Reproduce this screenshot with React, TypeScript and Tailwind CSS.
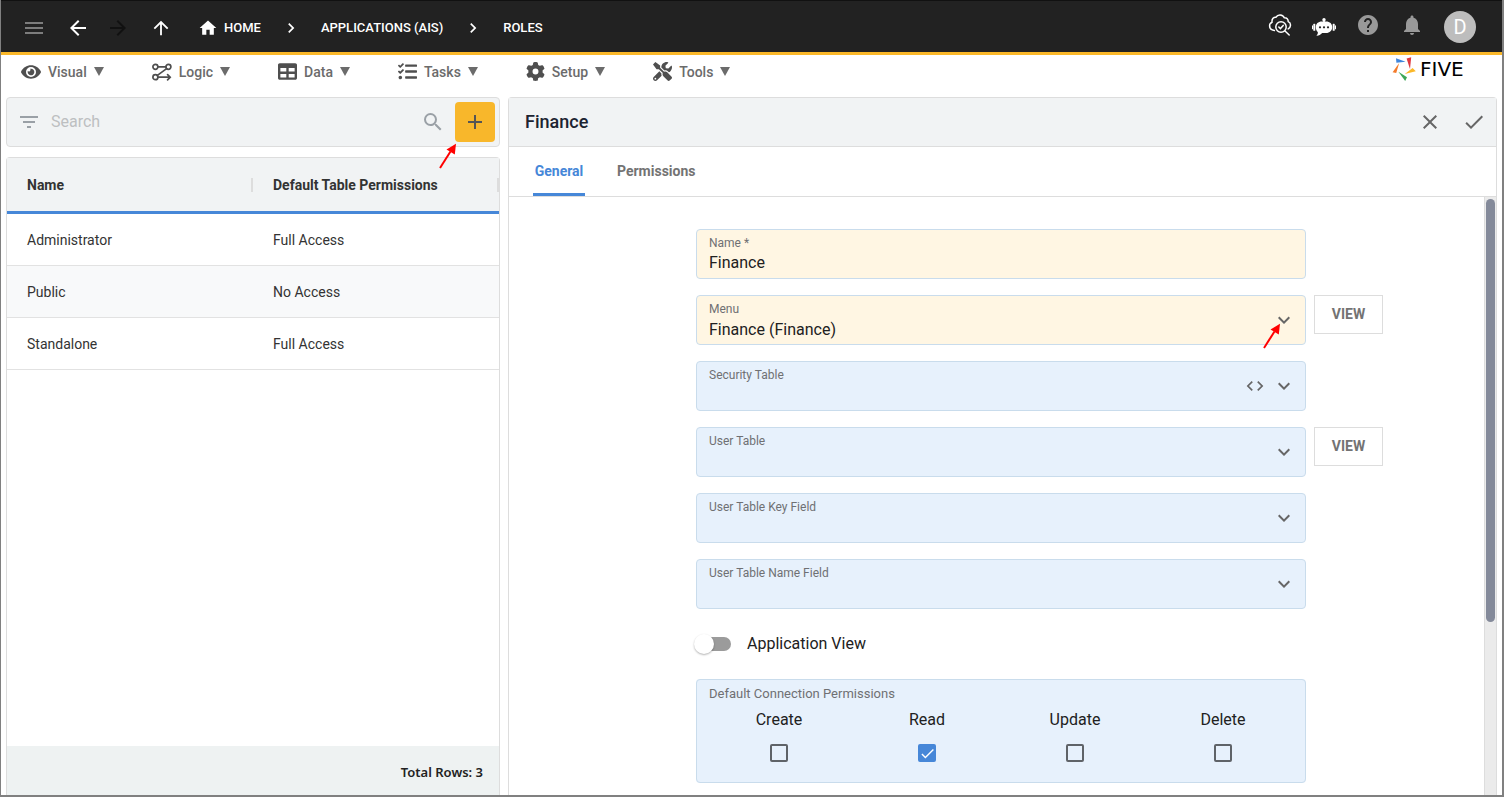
import { useState } from "react";
import type { ReactNode } from "react";
import { FaEye, FaTable, FaTasks, FaTools } from "react-icons/fa";
import { FaGear } from "react-icons/fa6";
import {
  MdAdd,
  MdArrowBack,
  MdArrowForward,
  MdArrowUpward,
  MdCheck,
  MdChevronRight,
  MdClose,
  MdCode,
  MdExpandMore,
  MdFilterList,
  MdHelp,
  MdHome,
  MdMenu,
  MdNotifications,
  MdSearch,
} from "react-icons/md";

function LogicIcon() {
  return (
    <svg viewBox="0 0 20 18" className="h-[18px] w-5" fill="none" stroke="currentColor" strokeWidth="1.7" strokeLinecap="round">
      <circle cx="3.4" cy="3.8" r="2.5" />
      <circle cx="16.4" cy="3.8" r="2.5" />
      <circle cx="3.4" cy="14.2" r="2.5" />
      <path d="M6 3.8h7.8M14.6 5.6 5.4 12.4M6 14.2h11.6M15.6 11.6l2.600 2.600-2.600 2.600" />
    </svg>
  );
}

function CloudCheckIcon() {
  return (
    <svg viewBox="0 0 24 24" className="size-6" fill="none" stroke="currentColor" strokeWidth="1.5" strokeLinecap="round">
      <path d="M6.400 17.600C3.600 17.200 1.600 15.400 1.600 12.800c0-1.800 1-3 2.400-3.600C3.600 6 5.800 3.800 8 4.200 9 2.400 10.600 1.800 12.200 1.900c2 .1 3.500 1.200 4.100 2.800 2.500-.2 4 1.700 3.900 3.900 1.600.7 2.400 2 2.300 3.600-.1 1.700-.9 3-2.300 3.700" />
      <circle cx="13" cy="14" r="5.200" />
      <path d="m10.800 14 1.600 1.600 2.800-3.200M17 18l4.200 4" />
    </svg>
  );
}

function BotIcon() {
  return (
    <svg viewBox="0 0 24 18" className="h-[18px] w-6" fill="currentColor">
      <circle cx="12" cy="1.800" r="1.700" />
      <path d="M11.200 2h1.600v3h-1.600zM10 3.600h4c4 0 6.200 2.400 6.200 5.600s-2.400 5.800-6.200 5.800h-3.800C8.600 16.800 6.600 17.800 4.400 17.600c1.200-1 1.600-2.200 1.400-3.600C4.600 13 3.800 11.200 3.800 9.200c0-3.200 2.200-5.600 6.200-5.600z" />
      <rect x="1.300" y="5.800" width="2" height="7" rx=".6" />
      <rect x="20.700" y="5.800" width="2" height="7" rx=".6" />
      <rect x="0" y="7.200" width="1" height="4" rx=".5" />
      <rect x="23" y="7.200" width="1" height="4" rx=".5" />
      <g fill="#222222">
        <circle cx="8" cy="9.300" r="1.100" />
        <circle cx="12" cy="9.300" r="1.100" />
        <circle cx="16" cy="9.300" r="1.100" />
      </g>
    </svg>
  );
}

function FiveMark() {
  return (
    <svg viewBox="0 0 24 24" className="size-6">
      <path d="M4 1.200 13.600 4.700 4.400 5.800z" fill="#3f86dc" />
      <path d="M14.600 1.600 19.200.2 18 12z" fill="#e0383e" />
      <path d="M23.800 14.200 20.600 11 12.800 17z" fill="#fbb829" />
      <path d="M6.400 14.800 15 20.200 13.200 24z" fill="#3da757" />
      <path d="M.6 15.200 4.200 16 7.200 6z" fill="#f47b2a" />
    </svg>
  );
}

function PointerArrow() {
  return (
    <svg viewBox="0 0 18 26" className="h-[26px] w-[18px]">
      <path d="M1 25 11.500 8.500" stroke="#ff0000" strokeWidth="2" />
      <path d="M17 .8 7.500 6.400 15.800 11.600z" fill="#ff0000" />
    </svg>
  );
}

const menus: { label: string; icon: ReactNode }[] = [
  { label: "Visual", icon: <FaEye size={20} /> },
  { label: "Logic", icon: <LogicIcon /> },
  { label: "Data", icon: <FaTable size={19} /> },
  { label: "Tasks", icon: <FaTasks size={19} /> },
  { label: "Setup", icon: <FaGear size={19} /> },
  { label: "Tools", icon: <FaTools size={19} /> },
];

const roles = [
  { name: "Administrator", access: "Full Access" },
  { name: "Public", access: "No Access" },
  { name: "Standalone", access: "Full Access" },
];

function TopBar() {
  return (
    <header className="flex h-[55px] shrink-0 items-center justify-between border-t border-b-[3px] border-t-[#111111] border-b-[#fbb829] bg-[#222222] pr-[26px] pl-[21px] text-white">
      <div className="flex items-center pt-0.5">
        <button aria-label="Menu" className="text-[#7d7d7d]">
          <MdMenu size={24} />
        </button>
        <button aria-label="Back" className="ml-5">
          <MdArrowBack size={24} />
        </button>
        <button aria-label="Forward" className="ml-4 text-[#111111]">
          <MdArrowForward size={24} />
        </button>
        <button aria-label="Up" className="ml-5">
          <MdArrowUpward size={22} />
        </button>
        <nav aria-label="Breadcrumb" className="ml-[26px] flex items-center text-[13px] font-medium">
          <a href="#home" className="flex items-center gap-1.5">
            <MdHome size={20} />
            HOME
          </a>
          <MdChevronRight size={20} className="mx-5" />
          <a href="#applications">APPLICATIONS (AIS)</a>
          <MdChevronRight size={20} className="mx-5" />
          <a href="#roles">ROLES</a>
        </nav>
      </div>
      <div className="flex items-center gap-5">
        <div className="flex items-center gap-5 pb-1">
          <button aria-label="Deployment status">
            <CloudCheckIcon />
          </button>
          <button aria-label="Assistant" className="pt-1">
            <BotIcon />
          </button>
          <button aria-label="Help" className="text-[#999999]">
            <MdHelp size={24} />
          </button>
          <button aria-label="Notifications" className="text-[#999999]">
            <MdNotifications size={24} />
          </button>
        </div>
        <button aria-label="Account" className="flex size-8 items-center justify-center rounded-full bg-[#bdbdbd] text-xl">
          D
        </button>
      </div>
    </header>
  );
}

function MenuBar() {
  return (
    <div className="flex h-[42px] shrink-0 items-start justify-between pr-[22px] pl-5">
      <nav aria-label="Main" className="flex gap-12">
        {menus.map((m) => (
          <button key={m.label} className="flex h-[33px] items-center text-sm font-medium text-[#6b6b6b]">
            <span className="mr-[7px] text-[#4f4f4f]">{m.icon}</span>
            {m.label}
            <svg viewBox="0 0 10 9" className="ml-[7px] h-[9px] w-2.5" fill="currentColor">
              <path d="M0 0h10L5 9z" />
            </svg>
          </button>
        ))}
      </nav>
      <a href="#five" aria-label="Five" className="flex h-7 items-center gap-1">
        <FiveMark />
        <span className="w-[60px] font-['DejaVu_Sans'] text-xl leading-6 text-black">FIVE</span>
      </a>
    </div>
  );
}

function RolesList() {
  return (
    <section className="flex w-[494px] shrink-0 flex-col gap-2.5">
      <div className="relative flex h-[50px] shrink-0 items-center rounded border border-[#dddddd] bg-[#f1f3f4] pr-1 pl-2.5">
        <button aria-label="Filter" className="text-[#9aa0a6]">
          <MdFilterList size={24} />
        </button>
        <input
          aria-label="Search"
          placeholder="Search"
          className="ml-2.5 min-w-0 flex-1 bg-transparent text-base outline-none placeholder:text-[#bdbfc1]"
        />
        <button aria-label="Run search" className="mr-2.5 text-[#9aa0a6]">
          <MdSearch size={24} />
        </button>
        <button aria-label="Add role" className="flex size-10 items-center justify-center rounded bg-[#f8b72b] text-[#555555]">
          <MdAdd size={24} />
        </button>
        <div className="pointer-events-none absolute top-[45px] right-[42px]">
          <PointerArrow />
        </div>
      </div>
      <div className="flex min-h-0 flex-1 flex-col rounded-t border border-b-0 border-[#dddddd]">
        <table className="w-full table-fixed border-separate border-spacing-0 text-left text-sm text-[#333333]">
          <thead className="bg-[#f1f3f4]">
            <tr>
              {["Name", "Default Table Permissions"].map((h) => (
                <th key={h} className="h-14 border-b-[3px] border-[#4687d8] pl-5 font-bold">
                  <div className="flex items-center justify-between">
                    {h}
                    <span className="h-3.5 w-0.5 bg-[#dddddd]" />
                  </div>
                </th>
              ))}
            </tr>
          </thead>
          <tbody>
            {roles.map((r) => (
              <tr key={r.name} className="even:bg-[#f8f9fa]">
                <td className="h-[52px] border-b border-[#e2e2e2] pl-5">{r.name}</td>
                <td className="h-[52px] border-b border-[#e2e2e2] pl-5">{r.access}</td>
              </tr>
            ))}
          </tbody>
        </table>
        <footer className="mt-auto flex h-[49px] items-center justify-end bg-[#eef2f2] px-4 pt-1 font-['Noto_Sans'] text-[13px] font-semibold text-[#222222]">
          Total Rows: 3
        </footer>
      </div>
    </section>
  );
}

function ViewButton() {
  return (
    <button className="ml-2 h-[39px] w-[69px] border border-[#dddddd] pb-0.5 text-sm font-bold text-[#737373]">VIEW</button>
  );
}

function SelectField({
  id,
  label,
  value = "",
  code,
  view,
  arrow,
}: {
  id: string;
  label: string;
  value?: string;
  code?: boolean;
  view?: boolean;
  arrow?: boolean;
}) {
  const tone = value ? "bg-[#fff6e3]" : "bg-[#e7f1fc]";
  return (
    <>
      <div className={`relative col-start-2 flex h-[50px] items-center rounded border border-[#c9dcec] pr-[9px] pl-3 ${tone}`}>
        <div className="flex h-full min-w-0 flex-1 flex-col pt-[5px]">
          <label htmlFor={id} className="text-xs text-[#6f7073]">
            {label}
          </label>
          <select id={id} defaultValue={value} className="h-[25px] w-full appearance-none bg-transparent text-base text-[#212121] outline-none">
            <option value={value}>{value}</option>
          </select>
        </div>
        {code && <MdCode size={20} className="mr-[7px] text-[#666666]" />}
        <MdExpandMore size={24} className="text-[#666666]" />
        {arrow && (
          <div className="pointer-events-none absolute top-[27px] right-6">
            <PointerArrow />
          </div>
        )}
      </div>
      {view && <ViewButton />}
    </>
  );
}

function PermissionBox({ label, defaultChecked }: { label: string; defaultChecked?: boolean }) {
  const [checked, setChecked] = useState(!!defaultChecked);
  return (
    <label className="flex flex-col items-center gap-3 text-base text-[#212121]">
      {label}
      <span className="grid size-[18px] place-items-center">
        <input
          type="checkbox"
          checked={checked}
          onChange={(e) => setChecked(e.target.checked)}
          className="col-start-1 row-start-1 size-[18px] appearance-none rounded-xs border-2 border-[#5f6368] checked:border-[#4687d8] checked:bg-[#4687d8]"
        />
        {checked && <MdCheck size={17} className="pointer-events-none col-start-1 row-start-1 text-white" />}
      </span>
    </label>
  );
}

function RoleForm() {
  return (
    <section className="flex min-w-0 flex-1 flex-col rounded-t border border-b-0 border-[#dddddd]">
      <div className="flex h-[49px] shrink-0 items-center border-b border-[#dddddd] bg-[#f1f3f4] pr-2.5 pl-4">
        <h1 className="flex-1 text-lg font-medium text-[#1c2331]">Finance</h1>
        <button aria-label="Cancel" className="mr-5 text-[#666666]">
          <MdClose size={24} />
        </button>
        <button aria-label="Save" className="text-[#666666]">
          <MdCheck size={24} />
        </button>
      </div>
      <div role="tablist" className="flex h-[50px] shrink-0 gap-8 border-b border-[#dddddd] px-6 text-sm font-bold text-[#737373]">
        <button role="tab" aria-selected="true" className="min-w-[52px] border-b-[3px] border-[#4687d8] pt-0.5 text-[#4687d8]">
          General
        </button>
        <button role="tab" aria-selected="false" className="border-b-[3px] border-transparent pt-0.5">
          Permissions
        </button>
      </div>
      <div className="flex min-h-0 flex-1">
        <form className="grid min-w-0 flex-1 grid-cols-[1fr_minmax(0,610px)_1fr] content-start gap-y-4 overflow-hidden pt-8 pl-[9px]">
          <div className="col-start-2 flex h-[50px] flex-col rounded border border-[#c9dcec] bg-[#fff6e3] px-3 pt-[5px]">
            <label htmlFor="name" className="text-xs text-[#6f7073]">
              Name *
            </label>
            <input id="name" defaultValue="Finance" className="h-6 w-full bg-transparent text-base text-[#212121] outline-none" />
          </div>
          <SelectField id="menu" label="Menu" value="Finance (Finance)" view arrow />
          <SelectField id="security" label="Security Table" code />
          <SelectField id="user-table" label="User Table" view />
          <SelectField id="user-key" label="User Table Key Field" />
          <SelectField id="user-name" label="User Table Name Field" />
          <label className="col-start-2 flex h-[38px] items-center gap-4 text-base text-[#212121]">
            <span className="relative flex h-5 w-[35px] items-center">
              <input type="checkbox" role="switch" className="peer h-3.5 w-[35px] appearance-none rounded-full bg-[#9b9b9b]" />
              <span className="pointer-events-none absolute top-0 -left-0.5 size-5 rounded-full bg-white shadow-[0_1px_2px_rgba(0,0,0,0.3)] peer-checked:left-4" />
            </span>
            Application View
          </label>
          <fieldset className="col-start-2 h-[104px] rounded border border-[#c9dcec] bg-[#e7f1fc] pt-[5px]">
            <legend className="float-left w-full px-3 text-[13px] leading-[18px] text-[#6f7073]">Default Connection Permissions</legend>
            <div className="clear-both grid grid-cols-4 px-2 pt-[5px]">
              <PermissionBox label="Create" />
              <PermissionBox label="Read" defaultChecked />
              <PermissionBox label="Update" />
              <PermissionBox label="Delete" />
            </div>
          </fieldset>
        </form>
        <div className="w-3 shrink-0 border-l border-[#dddddd] bg-[#ebebeb] px-px pt-0.5">
          <div className="h-[71%] rounded-full bg-[#848a9a]" />
        </div>
      </div>
    </section>
  );
}

export default function App() {
  return (
    <div className="flex h-screen flex-col overflow-hidden border-r-2 border-b-2 border-l border-[#808080] bg-white font-[Roboto,sans-serif]">
      <TopBar />
      <MenuBar />
      <main className="flex min-h-0 flex-1 gap-2 pr-[5px] pl-[5px]">
        <RolesList />
        <RoleForm />
      </main>
    </div>
  );
}
